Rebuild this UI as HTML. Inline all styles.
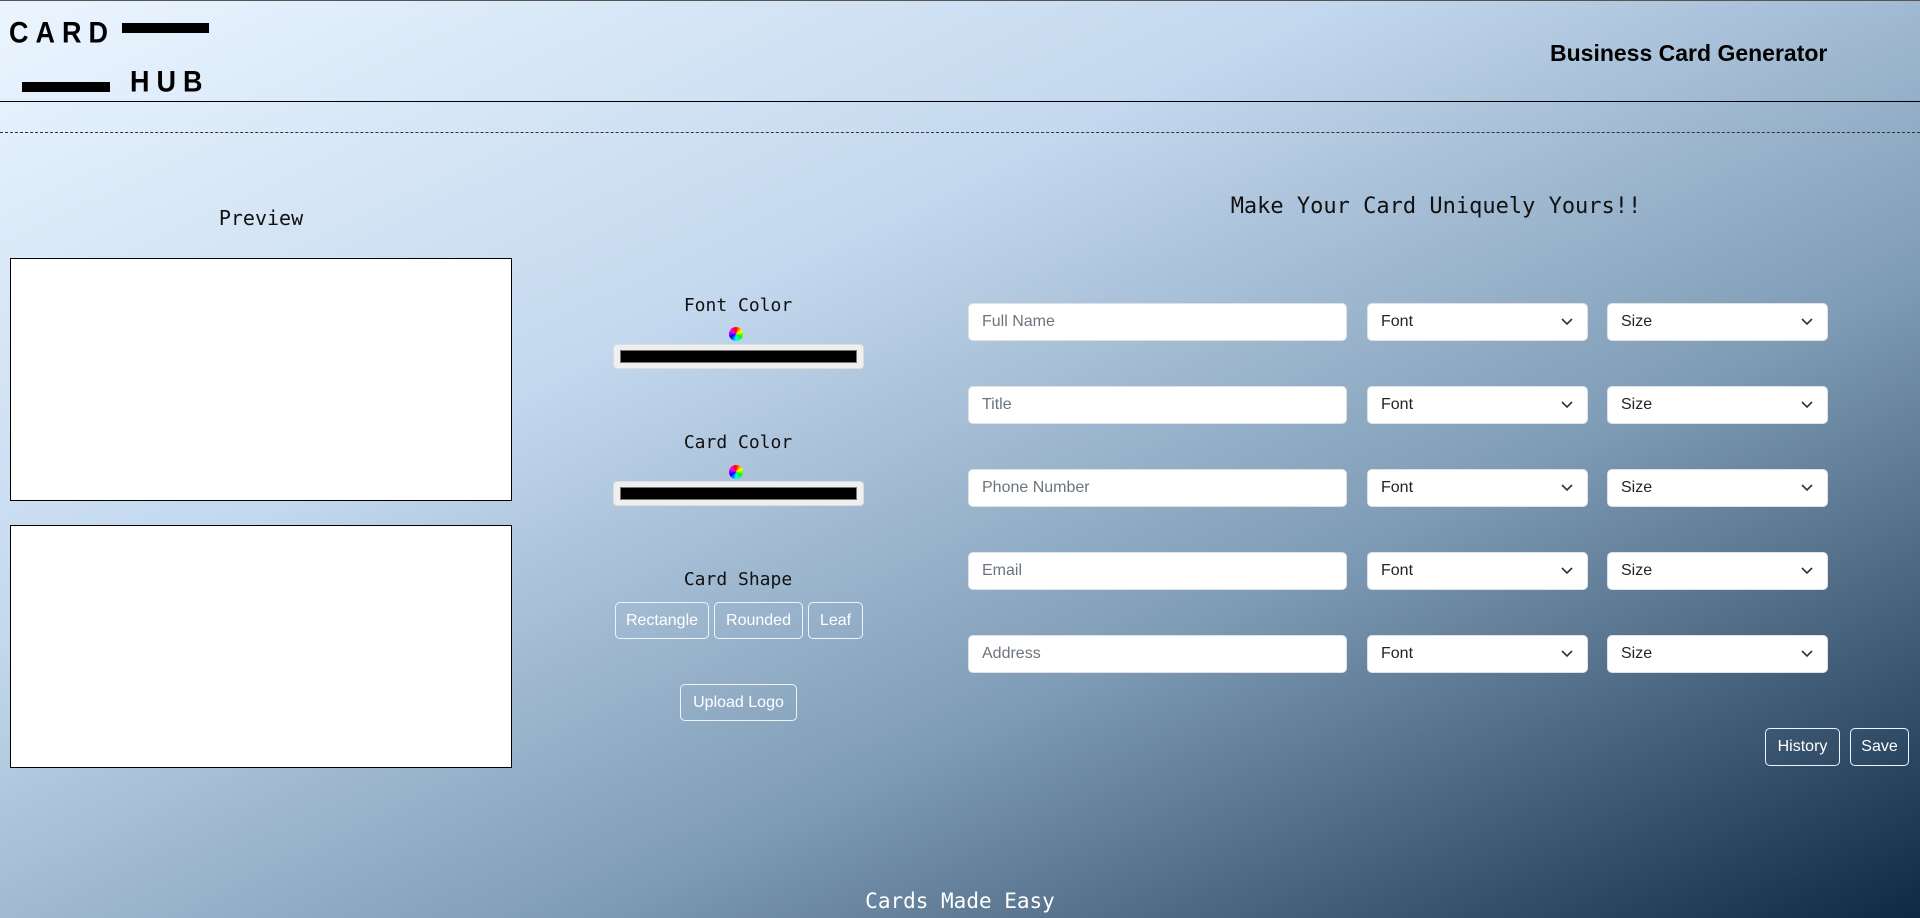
<!DOCTYPE html>
<html><head><meta charset="utf-8"><style>
*{box-sizing:border-box;margin:0;padding:0}
html,body{width:1920px;height:918px;overflow:hidden}
body{position:relative;background:linear-gradient(to bottom right,#ebf5ff 0%,#c3d8ee 35%,#7f9cb6 65%,#0f2944 100%);font-family:"Liberation Sans",sans-serif;border-top:1px solid #555}
.abs{position:absolute}
.mono{font-family:"DejaVu Sans Mono","Liberation Mono",monospace;color:#111}
.logo{font-weight:bold;font-size:27px;letter-spacing:7px;color:#000;transform:scaleY(1.1);transform-origin:top left}
.bar{background:#000;position:absolute}
.box{position:absolute;background:#fff;border:1px solid #000}
.inp{position:absolute;background:#fff;border:1px solid #dee2e6;border-radius:5px;height:38px;font-size:16px;color:#6c757d;padding:9px 13px}
.sel{color:#212529}
.sel svg{position:absolute;right:14px;top:14px}
.btn{position:absolute;border:1px solid #f0f4f8;border-radius:5px;color:#fff;font-size:16px;text-align:center;line-height:35px;height:37px}
.cbar{position:absolute;left:613px;width:251px;height:25px;background:#efefef;border:1px solid #ddd;border-radius:4px}
.cbar div{position:absolute;left:6px;top:5px;right:6px;bottom:5px;background:#000;border:1px solid #777}
.wheel{position:absolute;width:14px;height:14px;border-radius:50%;background:conic-gradient(red,yellow,lime,cyan,blue,magenta,red)}
.lbl{position:absolute;font-size:18px;text-align:center;width:300px}
</style></head><body>
<div class="abs logo" style="left:9px;top:15px">CARD</div>
<div class="bar" style="left:122px;top:22px;width:87px;height:10px"></div>
<div class="bar" style="left:22px;top:81px;width:88px;height:10px"></div>
<div class="abs logo" style="left:130px;top:64px">HUB</div>
<div class="abs" style="left:1550px;top:39px;font-size:23px;font-weight:bold;color:#000">Business Card Generator</div>
<div class="abs" style="left:0;top:100px;width:1920px;border-top:1.5px solid #000"></div>
<div class="abs" style="left:0;top:131px;width:1920px;border-top:1px dashed #333"></div>

<div class="mono lbl" style="left:111px;top:205px;font-size:20px">Preview</div>
<div class="box" style="left:10px;top:257px;width:502px;height:243px"></div>
<div class="box" style="left:10px;top:524px;width:502px;height:243px"></div>

<div class="mono lbl" style="left:588px;top:294px">Font Color</div>
<div class="wheel" style="left:729px;top:326px"></div>
<div class="cbar" style="top:343px"><div></div></div>
<div class="mono lbl" style="left:588px;top:431px">Card Color</div>
<div class="wheel" style="left:729px;top:464px"></div>
<div class="cbar" style="top:480px"><div></div></div>
<div class="mono lbl" style="left:588px;top:568px">Card Shape</div>
<div class="btn" style="left:615px;top:601px;width:94px">Rectangle</div>
<div class="btn" style="left:714px;top:601px;width:89px">Rounded</div>
<div class="btn" style="left:808px;top:601px;width:55px">Leaf</div>
<div class="btn" style="left:680px;top:683px;width:117px">Upload Logo</div>

<div class="mono abs" style="left:1186px;top:193px;width:500px;text-align:center;font-size:22px">Make Your Card Uniquely Yours!!</div>

<div class="inp" style="left:968px;top:302px;width:379px">Full Name</div>
<div class="inp sel" style="left:1367px;top:302px;width:221px">Font<svg width="12" height="8"><path d="M1 1l5 5 5-5" stroke="#333" stroke-width="1.6" fill="none"/></svg></div>
<div class="inp sel" style="left:1607px;top:302px;width:221px">Size<svg width="12" height="8"><path d="M1 1l5 5 5-5" stroke="#333" stroke-width="1.6" fill="none"/></svg></div>

<div class="inp" style="left:968px;top:385px;width:379px">Title</div>
<div class="inp sel" style="left:1367px;top:385px;width:221px">Font<svg width="12" height="8"><path d="M1 1l5 5 5-5" stroke="#333" stroke-width="1.6" fill="none"/></svg></div>
<div class="inp sel" style="left:1607px;top:385px;width:221px">Size<svg width="12" height="8"><path d="M1 1l5 5 5-5" stroke="#333" stroke-width="1.6" fill="none"/></svg></div>

<div class="inp" style="left:968px;top:468px;width:379px">Phone Number</div>
<div class="inp sel" style="left:1367px;top:468px;width:221px">Font<svg width="12" height="8"><path d="M1 1l5 5 5-5" stroke="#333" stroke-width="1.6" fill="none"/></svg></div>
<div class="inp sel" style="left:1607px;top:468px;width:221px">Size<svg width="12" height="8"><path d="M1 1l5 5 5-5" stroke="#333" stroke-width="1.6" fill="none"/></svg></div>

<div class="inp" style="left:968px;top:551px;width:379px">Email</div>
<div class="inp sel" style="left:1367px;top:551px;width:221px">Font<svg width="12" height="8"><path d="M1 1l5 5 5-5" stroke="#333" stroke-width="1.6" fill="none"/></svg></div>
<div class="inp sel" style="left:1607px;top:551px;width:221px">Size<svg width="12" height="8"><path d="M1 1l5 5 5-5" stroke="#333" stroke-width="1.6" fill="none"/></svg></div>

<div class="inp" style="left:968px;top:634px;width:379px">Address</div>
<div class="inp sel" style="left:1367px;top:634px;width:221px">Font<svg width="12" height="8"><path d="M1 1l5 5 5-5" stroke="#333" stroke-width="1.6" fill="none"/></svg></div>
<div class="inp sel" style="left:1607px;top:634px;width:221px">Size<svg width="12" height="8"><path d="M1 1l5 5 5-5" stroke="#333" stroke-width="1.6" fill="none"/></svg></div>

<div class="btn" style="left:1765px;top:727px;width:75px;height:38px;line-height:36px">History</div>
<div class="btn" style="left:1850px;top:727px;width:59px;height:38px;line-height:36px">Save</div>

<div class="mono abs" style="left:710px;top:888px;width:500px;text-align:center;font-size:21px;color:#fff">Cards Made Easy</div>
</body></html>
